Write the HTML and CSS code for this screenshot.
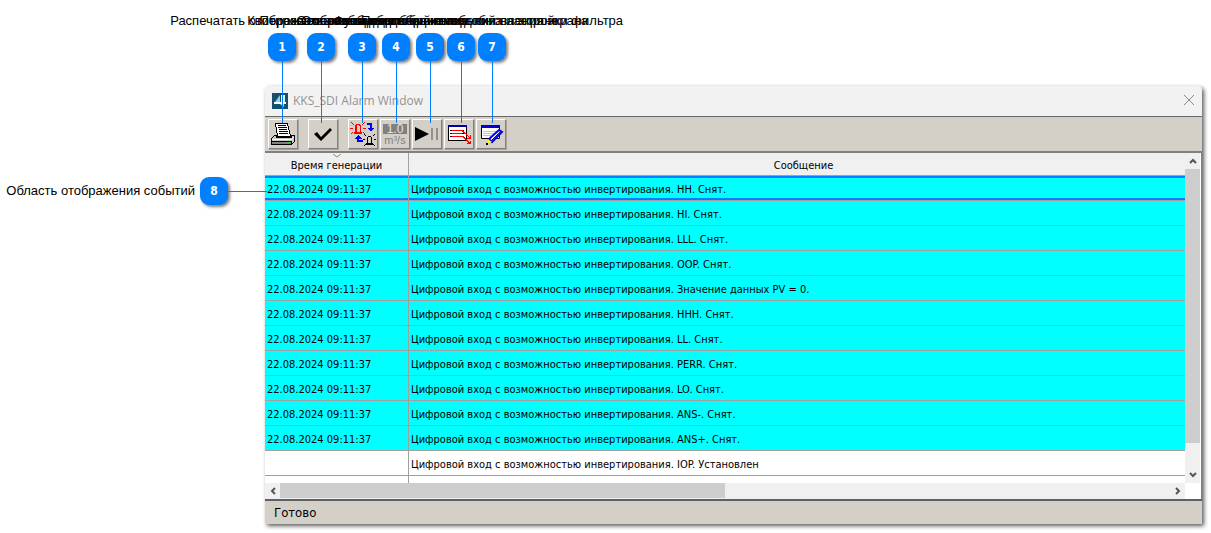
FILE: index.html
```html
<!DOCTYPE html>
<html lang="ru">
<head>
<meta charset="utf-8">
<title>KKS_SDI Alarm Window</title>
<link rel="stylesheet" href="styles.css">
</head>
<body>
<main class="figure">
  <section class="window">
    <header class="titlebar">
      <svg class="app-icon" width="16" height="16" viewBox="0 0 16 16"><rect width="16" height="16" fill="#17506b"/><path d="M8 2V9H3Z" fill="#8fd0e4"/><path d="M9 2H13V9H9Z" fill="#dff2f7"/><path d="M2 9H14V11H2Z" fill="#fff"/><path d="M8 11L12 14V11Z" fill="#a9d9e8"/></svg>
      <h1 class="title">KKS_SDI Alarm Window</h1>
      <button class="close" aria-label="Закрыть"><svg width="12" height="12" viewBox="0 0 12 12"><path d="M1 1L11 11M11 1L1 11" stroke="#8a8a8a" fill="none"/></svg></button>
    </header>
    <div class="toolbar">
      <button class="tool" aria-label="Распечатать">
        <svg width="26" height="26" viewBox="0 0 26 26" shape-rendering="crispEdges"><path d="M5.500 2.500H17.500L20.500 15.500H7.500Z" fill="#fff" stroke="#000"/><path d="M8 4.500H16M8 6.500H17M9 8.500H17M9 10.500H18M9 12.500H18" stroke="#000" fill="none"/><path d="M4.500 14.500L1.500 17.500V23.500H21.500L24.500 20.500V14.500H21.500V16.500H6.500V14.500Z" fill="#c8c8c8" stroke="#000"/><path d="M2 18.500H21.500L24 16" fill="none" stroke="#fff"/><path d="M1.500 20.500H21.500V23.500H1.500Z" fill="#808080" stroke="#000"/><path d="M17 21.500H19" stroke="#0f0"/></svg>
      </button>
      <button class="tool tool-spaced" aria-label="Квитировать">
        <svg width="26" height="26" viewBox="0 0 26 26"><path d="M4 13L7 11L11 16L20 7L22 9L11 20Z" fill="#000"/></svg>
      </button>
      <button class="tool tool-spaced" aria-label="Переключить">
        <svg width="26" height="26" viewBox="0 0 26 26" fill="none" shape-rendering="crispEdges"><path d="M5.500 10.500V5.500L6.500 3.500H9.500L10.500 5.500V10.500M4 11.500H12" stroke="#f00"/><path d="M6 5H7V11H6ZM4 11H12V13H4Z" fill="#f00"/><path d="M1 1L4 4M15 1L12 4M0 7.500H3M13 7.500H16M1 13L3 11M15 13L13 11" stroke="#f00"/><path d="M17 3H21V8" stroke="#00f" stroke-width="2"/><path d="M17 7H24L21 10Z" fill="#00f"/><path d="M13 20H8V17" stroke="#00f" stroke-width="2"/><path d="M5 18H12L8 14Z" fill="#00f"/><path d="M17.500 22.500V16.500L18.500 15.500H20.500L21.500 16.500V22.500M16 23.500H23" stroke="#000"/><path d="M16 22H23V24H16Z" fill="#000"/><path d="M14 13L16 15M25 13L23 15M13 18.500H15M24 18.500H26M14 25L16 23M25 25L23 23" stroke="#000"/></svg>
      </button>
      <button class="tool" aria-label="Единицы измерения">
        <svg width="28" height="26" viewBox="0 0 28 26"><rect x="2" y="3" width="24" height="10" fill="#808080"/><text x="14" y="12" text-anchor="middle" class="unit unit-value">1.0</text><text x="14" y="23" text-anchor="middle" class="unit">m³/s</text></svg>
      </button>
      <button class="tool" aria-label="Пауза">
        <svg width="26" height="26" viewBox="0 0 26 26"><path d="M1 6L15 13L1 20Z" fill="#000"/><path d="M17 7H19V19H17ZM22 7H24V19H22Z" fill="#909090"/></svg>
      </button>
      <button class="tool" aria-label="Прокрутка">
        <svg width="26" height="26" viewBox="0 0 26 26" shape-rendering="crispEdges" fill="none"><path d="M2.500 4.500H20.500V19.500H2.500Z" fill="#fff" stroke="#000"/><path d="M2 4H21V6H2Z" fill="#00a"/><path d="M4 9.500H18M4 12.500H18M4 15.500H18" stroke="#000"/><path d="M6 9.500H16L24 17M6 12.500H16M6 15.500H17L24 22.500" stroke="#f00"/><path d="M24.500 14V17.500H21M24.500 20V22.500H21" stroke="#f00"/></svg>
      </button>
      <button class="tool" aria-label="Фильтр">
        <svg width="26" height="26" viewBox="0 0 26 26"><path d="M3.500 5.500H21.500V17.500H3.500Z" fill="#fff" stroke="#000"/><path d="M3 4H22V7H3Z" fill="#00d"/><path d="M5 10.500H19M5 12.500H17M5 14.500H13" stroke="#c0c0c0"/><path d="M21 9L24 11L14 21L11 18Z" fill="#fff" stroke="#00d" stroke-width="2"/><path d="M22 11L13 20" stroke="#00d"/><path d="M10 18L14 21L10 22Z" fill="#ff0"/><path d="M8 22H10V24H8Z" fill="#000"/></svg>
      </button>
    </div>
    <div class="list">
      <div class="view">
        <table class="events">
          <thead><tr><th class="time"><svg class="sort" width="8" height="4" viewBox="0 0 8 4"><path d="M0 0L4 3L8 0" fill="none" stroke="#888"/></svg>Время генерации</th><th class="message">Сообщение</th></tr></thead>
          <tbody>
            <tr class="gone selected"><td>22.08.2024 09:11:37</td><td>Цифровой вход с возможностью инвертирования. HH. Снят.</td></tr>
            <tr class="gone"><td>22.08.2024 09:11:37</td><td>Цифровой вход с возможностью инвертирования. HI. Снят.</td></tr>
            <tr class="gone"><td>22.08.2024 09:11:37</td><td>Цифровой вход с возможностью инвертирования. LLL. Снят.</td></tr>
            <tr class="gone"><td>22.08.2024 09:11:37</td><td>Цифровой вход с возможностью инвертирования. OOP. Снят.</td></tr>
            <tr class="gone"><td>22.08.2024 09:11:37</td><td>Цифровой вход с возможностью инвертирования. Значение данных PV = 0.</td></tr>
            <tr class="gone"><td>22.08.2024 09:11:37</td><td>Цифровой вход с возможностью инвертирования. HHH. Снят.</td></tr>
            <tr class="gone"><td>22.08.2024 09:11:37</td><td>Цифровой вход с возможностью инвертирования. LL. Снят.</td></tr>
            <tr class="gone"><td>22.08.2024 09:11:37</td><td>Цифровой вход с возможностью инвертирования. PERR. Снят.</td></tr>
            <tr class="gone"><td>22.08.2024 09:11:37</td><td>Цифровой вход с возможностью инвертирования. LO. Снят.</td></tr>
            <tr class="gone"><td>22.08.2024 09:11:37</td><td>Цифровой вход с возможностью инвертирования. ANS-. Снят.</td></tr>
            <tr class="gone"><td>22.08.2024 09:11:37</td><td>Цифровой вход с возможностью инвертирования. ANS+. Снят.</td></tr>
            <tr><td></td><td>Цифровой вход с возможностью инвертирования. IOP. Установлен</td></tr>
            <tr class="rest"><td></td><td></td></tr>
          </tbody>
        </table>
        <div class="scroll scroll-x">
          <button class="step" aria-label="Влево"><svg width="8" height="8" viewBox="0 0 8 8"><path d="M6 1L3 4L6 7" /></svg></button>
          <div class="track"><div class="thumb"></div></div>
          <button class="step" aria-label="Вправо"><svg width="8" height="8" viewBox="0 0 8 8"><path d="M2 1L5 4L2 7" /></svg></button>
        </div>
      </div>
      <div class="scroll scroll-y">
        <button class="step" aria-label="Вверх"><svg width="8" height="8" viewBox="0 0 8 8"><path d="M1 6L4 3L7 6" /></svg></button>
        <div class="track"><div class="thumb"></div></div>
        <button class="step" aria-label="Вниз"><svg width="8" height="8" viewBox="0 0 8 8"><path d="M1 2L4 5L7 2" /></svg></button>
      </div>
    </div>
    <footer class="status">Готово</footer>
  </section>

  <div class="callout c1"><span class="label">Распечатать отображаемые события</span><b class="badge">1</b><i class="leader"></i></div>
  <div class="callout c2"><span class="label">Квитировать сообщение</span><b class="badge">2</b><i class="leader"></i></div>
  <div class="callout c3"><span class="label">Переключение вида отображения</span><b class="badge">3</b><i class="leader"></i></div>
  <div class="callout c4"><span class="label">Отображение единиц измерения</span><b class="badge">4</b><i class="leader"></i></div>
  <div class="callout c5"><span class="label">Остановка обновления событий на экране</span><b class="badge">5</b><i class="leader"></i></div>
  <div class="callout c6"><span class="label">Функция отображения обновления экрана</span><b class="badge">6</b><i class="leader"></i></div>
  <div class="callout c7"><span class="label">Подробный вывод окна настройки фильтра</span><b class="badge">7</b><i class="leader"></i></div>
  <div class="callout side"><span class="label">Область отображения событий</span><b class="badge">8</b><i class="leader"></i></div>
</main>
</body>
</html>
```
FILE: styles.css
```css
* { box-sizing: border-box; }
body {
  margin: 0;
  background: #fff;
  color: #000;
  font-family: "Liberation Sans", Arial, sans-serif;
  font-size: 13px;
}
button { margin: 0; padding: 0; border: 0; background: none; font: inherit; }
svg { display: block; flex: none; }
.figure { position: relative; padding: 86px 9px 8px 265px; }

.window {
  border-radius: 4px 4px 0 0;
  background: #f2f2f2;
  box-shadow: 2px 2px 4px rgba(0, 0, 0, 0.65);
}
.titlebar {
  display: flex;
  align-items: center;
  height: 30px;
  padding: 0 6px 0 7px;
}
.title {
  flex: 1;
  margin: 0 0 0 5px;
  color: #929292;
  font: 12px/16px "Open Sans", "Noto Sans", sans-serif;
}
.close { padding: 0 1px 2px; }

.toolbar {
  display: flex;
  gap: 2px;
  padding: 2px 3px;
  border-top: 1px solid #686868;
  border-bottom: 2px solid #808080;
  background: #d4d0c8;
}
.tool {
  display: flex;
  align-items: center;
  justify-content: center;
  width: 30px;
  height: 30px;
  border: 1px solid;
  border-color: #fff #808080 #808080 #fff;
  box-shadow: 1px 1px 0 #a8a49c;
}
.tool-spaced { margin-left: 8px; }
.unit { fill: #808080; font: 11px "Liberation Sans", sans-serif; }
.unit-value { fill: #e8e4dc; font-size: 12px; }

.list {
  display: flex;
  background: #fff;
  border-right: 1px solid #808080;
  padding-right: 1px;
}
.view { flex: 1; min-width: 0; }
.events {
  width: 100%;
  border-collapse: separate;
  border-spacing: 0;
  table-layout: fixed;
  font: 11px/16px "DejaVu Sans Condensed", "Noto Sans", sans-serif;
}
.events th {
  position: relative;
  height: 23px;
  padding: 4px 2px 0;
  border-bottom: 1px solid #a0a0a0;
  background: #f0f0f0;
  font-weight: normal;
  text-align: center;
}
.events .time { width: 144px; }
.events .message { padding-left: 15px; }
.sort { position: absolute; top: 1px; left: 68px; }
.events td {
  height: 25px;
  padding: 3px 2px 0;
  border-bottom: 1px solid #a0a0a0;
  white-space: nowrap;
}
.events th:first-child, .events td:first-child { border-right: 1px solid #a0a0a0; }
.gone td { background: #0ff; }
.selected td { box-shadow: inset 0 2px #0080ff, inset 0 -2px #0080ff; }
.events .rest td { height: 7px; border-bottom: 0; }

.scroll { display: flex; background: #f0f0f0; }
.scroll-x { height: 16px; }
.scroll-y { flex-direction: column; width: 15px; margin-bottom: 16px; }
.step {
  display: flex;
  align-items: center;
  justify-content: center;
  width: 15px;
  height: 16px;
}
.step path { fill: none; stroke: #555; stroke-width: 2; }
.track { flex: 1; }
.thumb { background: #cdcdcd; }
.scroll-x .thumb { width: 50%; height: 15px; }
.scroll-y .thumb { width: 15px; height: 92%; }

.status {
  padding: 4px 9px 3px;
  border-top: 2px solid #606060;
  background: #d4d0c8;
  font: 13px/16px "DejaVu Sans Condensed", sans-serif;
}

.callout {
  position: absolute;
  top: 13px;
  display: flex;
  flex-direction: column;
  align-items: center;
  width: 28px;
}
.label { line-height: 16px; white-space: nowrap; }
.badge {
  width: 28px;
  height: 28px;
  margin-top: 4px;
  border-radius: 9px;
  background: #0080ff;
  box-shadow: 2px 2px 3px rgba(0, 0, 0, 0.5);
  color: #fff;
  font: bold 12px/28px "DejaVu Sans Condensed", sans-serif;
  text-align: center;
}
.leader { width: 1px; height: 62px; background: #0080ff; }
.c1 { left: 268px; }
.c2 { left: 307px; }
.c3 { left: 348px; }
.c4 { left: 382px; }
.c5 { left: 416px; }
.c6 { left: 447px; }
.c7 { left: 478px; }
.side {
  top: 177px;
  right: calc(100% - 267px);
  width: auto;
  flex-direction: row;
  gap: 5px;
}
.side .badge { margin-top: 0; }
.side .leader { width: 39px; height: 1px; margin-left: -5px; }
```
